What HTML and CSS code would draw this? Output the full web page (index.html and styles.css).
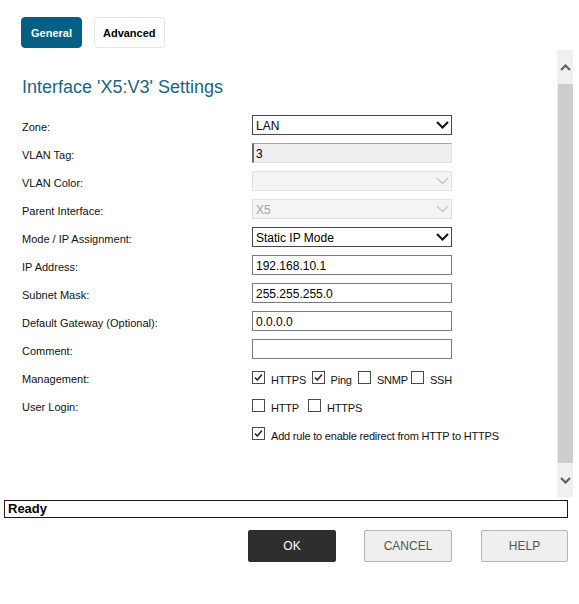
FILE: index.html
```html
<!DOCTYPE html>
<html>
<head>
<meta charset="utf-8">
<link rel="stylesheet" href="styles.css">
</head>
<body>
<div class="tabs">
  <div class="tab tab-active">General</div>
  <div class="tab">Advanced</div>
</div>
<div class="main">
  <div class="content">
    <h1 class="title">Interface 'X5:V3' Settings</h1>
    <div class="form">
      <div class="label">Zone:</div>
      <div class="select"><span>LAN</span><svg class="chev" width="13" height="8" viewBox="0 0 13 8"><polyline points="1,1 6.5,6.5 12,1" fill="none" stroke="#111" stroke-width="2"/></svg></div>

      <div class="label">VLAN Tag:</div>
      <div class="input input-ro">3</div>

      <div class="label">VLAN Color:</div>
      <div class="select select-dis"><span></span><svg class="chev" width="13" height="8" viewBox="0 0 13 8"><polyline points="1,1 6.5,6.5 12,1" fill="none" stroke="#c4c4c4" stroke-width="1.3"/></svg></div>

      <div class="label">Parent Interface:</div>
      <div class="select select-dis"><span>X5</span><svg class="chev" width="13" height="8" viewBox="0 0 13 8"><polyline points="1,1 6.5,6.5 12,1" fill="none" stroke="#c4c4c4" stroke-width="1.3"/></svg></div>

      <div class="label">Mode / IP Assignment:</div>
      <div class="select"><span>Static IP Mode</span><svg class="chev" width="13" height="8" viewBox="0 0 13 8"><polyline points="1,1 6.5,6.5 12,1" fill="none" stroke="#111" stroke-width="2"/></svg></div>

      <div class="label">IP Address:</div>
      <div class="input">192.168.10.1</div>

      <div class="label">Subnet Mask:</div>
      <div class="input">255.255.255.0</div>

      <div class="label">Default Gateway (Optional):</div>
      <div class="input">0.0.0.0</div>

      <div class="label">Comment:</div>
      <div class="input"></div>

      <div class="label">Management:</div>
      <div class="checks">
        <div class="cb-item w64"><span class="cb"><svg width="11" height="11" viewBox="0 0 11 11"><polyline points="2,5.5 4.3,8 9,2.5" fill="none" stroke="#333" stroke-width="1.8"/></svg></span><span class="cb-text">HTTPS</span></div>
        <div class="cb-item w50"><span class="cb"><svg width="11" height="11" viewBox="0 0 11 11"><polyline points="2,5.5 4.3,8 9,2.5" fill="none" stroke="#333" stroke-width="1.8"/></svg></span><span class="cb-text">Ping</span></div>
        <div class="cb-item w57"><span class="cb"></span><span class="cb-text">SNMP</span></div>
        <div class="cb-item"><span class="cb"></span><span class="cb-text">SSH</span></div>
      </div>

      <div class="label">User Login:</div>
      <div class="checks">
        <div class="cb-item w56"><span class="cb"></span><span class="cb-text">HTTP</span></div>
        <div class="cb-item"><span class="cb"></span><span class="cb-text">HTTPS</span></div>
      </div>

      <div class="label"></div>
      <div class="checks">
        <div class="cb-item"><span class="cb"><svg width="11" height="11" viewBox="0 0 11 11"><polyline points="2,5.5 4.3,8 9,2.5" fill="none" stroke="#333" stroke-width="1.8"/></svg></span><span class="cb-text nowrap">Add rule to enable redirect from HTTP to HTTPS</span></div>
      </div>
    </div>
  </div>
  <div class="scrollbar">
    <div class="sb-btn"><svg width="11" height="7" viewBox="0 0 11 7"><polyline points="1,6 5.5,1.5 10,6" fill="none" stroke="#606060" stroke-width="2.2"/></svg></div>
    <div class="sb-thumb"></div>
    <div class="sb-btn"><svg width="11" height="7" viewBox="0 0 11 7"><polyline points="1,1 5.5,5.5 10,1" fill="none" stroke="#606060" stroke-width="2.2"/></svg></div>
  </div>
</div>
<div class="status">Ready</div>
<div class="actions">
  <div class="btn btn-primary">OK</div>
  <div class="btn">CANCEL</div>
  <div class="btn btn-narrow">HELP</div>
</div>
</body>
</html>
```

FILE: styles.css
```css
* { box-sizing: border-box; }
body {
  margin: 0;
  font-family: "Liberation Sans", Arial, sans-serif;
  color: #000;
  background: #fff;
  width: 579px;
  height: 604px;
  overflow: hidden;
}
.tabs {
  display: flex;
  gap: 12px;
  padding: 17px 0 0 21px;
}
.tab {
  height: 31px;
  line-height: 30px;
  padding: 0 8px;
  font-size: 11px;
  font-weight: bold;
  border: 1px solid #e6e6e6;
  border-radius: 4px;
  background: #fff;
  color: #000;
}
.tab-active {
  background: #055e84;
  border-color: #055e84;
  color: #fff;
  padding: 0 9px;
}
.main {
  display: flex;
  margin-top: 2px;
  height: 447px;
}
.content {
  width: 557px;
  padding-left: 22px;
}
.title {
  margin: 26px 0 0 0;
  font-size: 18px;
  line-height: 22px;
  font-weight: normal;
  color: #1b6489;
}
.form {
  margin-top: 17px;
  display: grid;
  grid-template-columns: 230px 200px;
  grid-auto-rows: 20px;
  row-gap: 8px;
  align-items: center;
}
.label {
  font-size: 11px;
  color: #111;
  padding-top: 4px;
}
.select, .input {
  height: 20px;
  width: 200px;
  border: 1px solid #4a4a4a;
  background: #fff;
  font-size: 12px;
  line-height: 18px;
  padding-left: 3px;
  padding-top: 1px;
  display: flex;
  align-items: center;
  justify-content: space-between;
}
.input { border-color: #7a7a7a; }
.select .chev { margin-right: 2px; margin-top: -1px; }
.select-dis {
  background: #f4f4f4;
  border-color: #e2e2e2;
  color: #a2a2a2;
}
.input-ro {
  background: #efeff2;
  border-top: 1px solid #a8a8a8;
  border-left: 2px solid #6a6a6a;
  border-right: 1px solid #e2e2e2;
  border-bottom: 1px solid #e2e2e2;
  padding-left: 2px;
}
.checks {
  display: flex;
  align-items: center;
  height: 20px;
}
.cb-item {
  display: flex;
  align-items: center;
  font-size: 11px;
}
.w64 { width: 64px; }
.w50 { width: 50px; }
.w57 { width: 57px; }
.w56 { width: 56px; }
.cb {
  width: 13px;
  height: 13px;
  border: 1px solid #4a4a4a;
  background: #fff;
  display: flex;
  align-items: center;
  justify-content: center;
  margin-right: 6px;
  flex: none;
  margin-top: 1px;
}
.cb-text {
  color: #111;
  padding-top: 5px;
  letter-spacing: -0.2px;
}
.nowrap { white-space: nowrap; }
.scrollbar {
  width: 16px;
  background: #f0f0f0;
  display: flex;
  flex-direction: column;
}
.sb-btn {
  height: 34px;
  display: flex;
  align-items: center;
  justify-content: center;
  flex: none;
}
.sb-thumb {
  flex: 1;
  background: #cdcdcd;
  margin-left: 1px;
}
.status {
  margin: 3px 0 0 4px;
  width: 564px;
  height: 18px;
  border: 1px solid #1a1a1a;
  font-size: 13px;
  font-weight: bold;
  line-height: 16px;
  padding-left: 3px;
}
.actions {
  display: flex;
  gap: 28px;
  padding-left: 248px;
  margin-top: 12px;
}
.btn {
  width: 88px;
  height: 32px;
  border: 1px solid #b4b4b4;
  background: #efefef;
  border-radius: 2px;
  color: #555;
  font-size: 12px;
  line-height: 30px;
  text-align: center;
}
.btn-primary {
  background: #2e2e2e;
  border-color: #2e2e2e;
  color: #fff;
}
.btn-narrow { width: 87px; margin-left: 1px; }
```
